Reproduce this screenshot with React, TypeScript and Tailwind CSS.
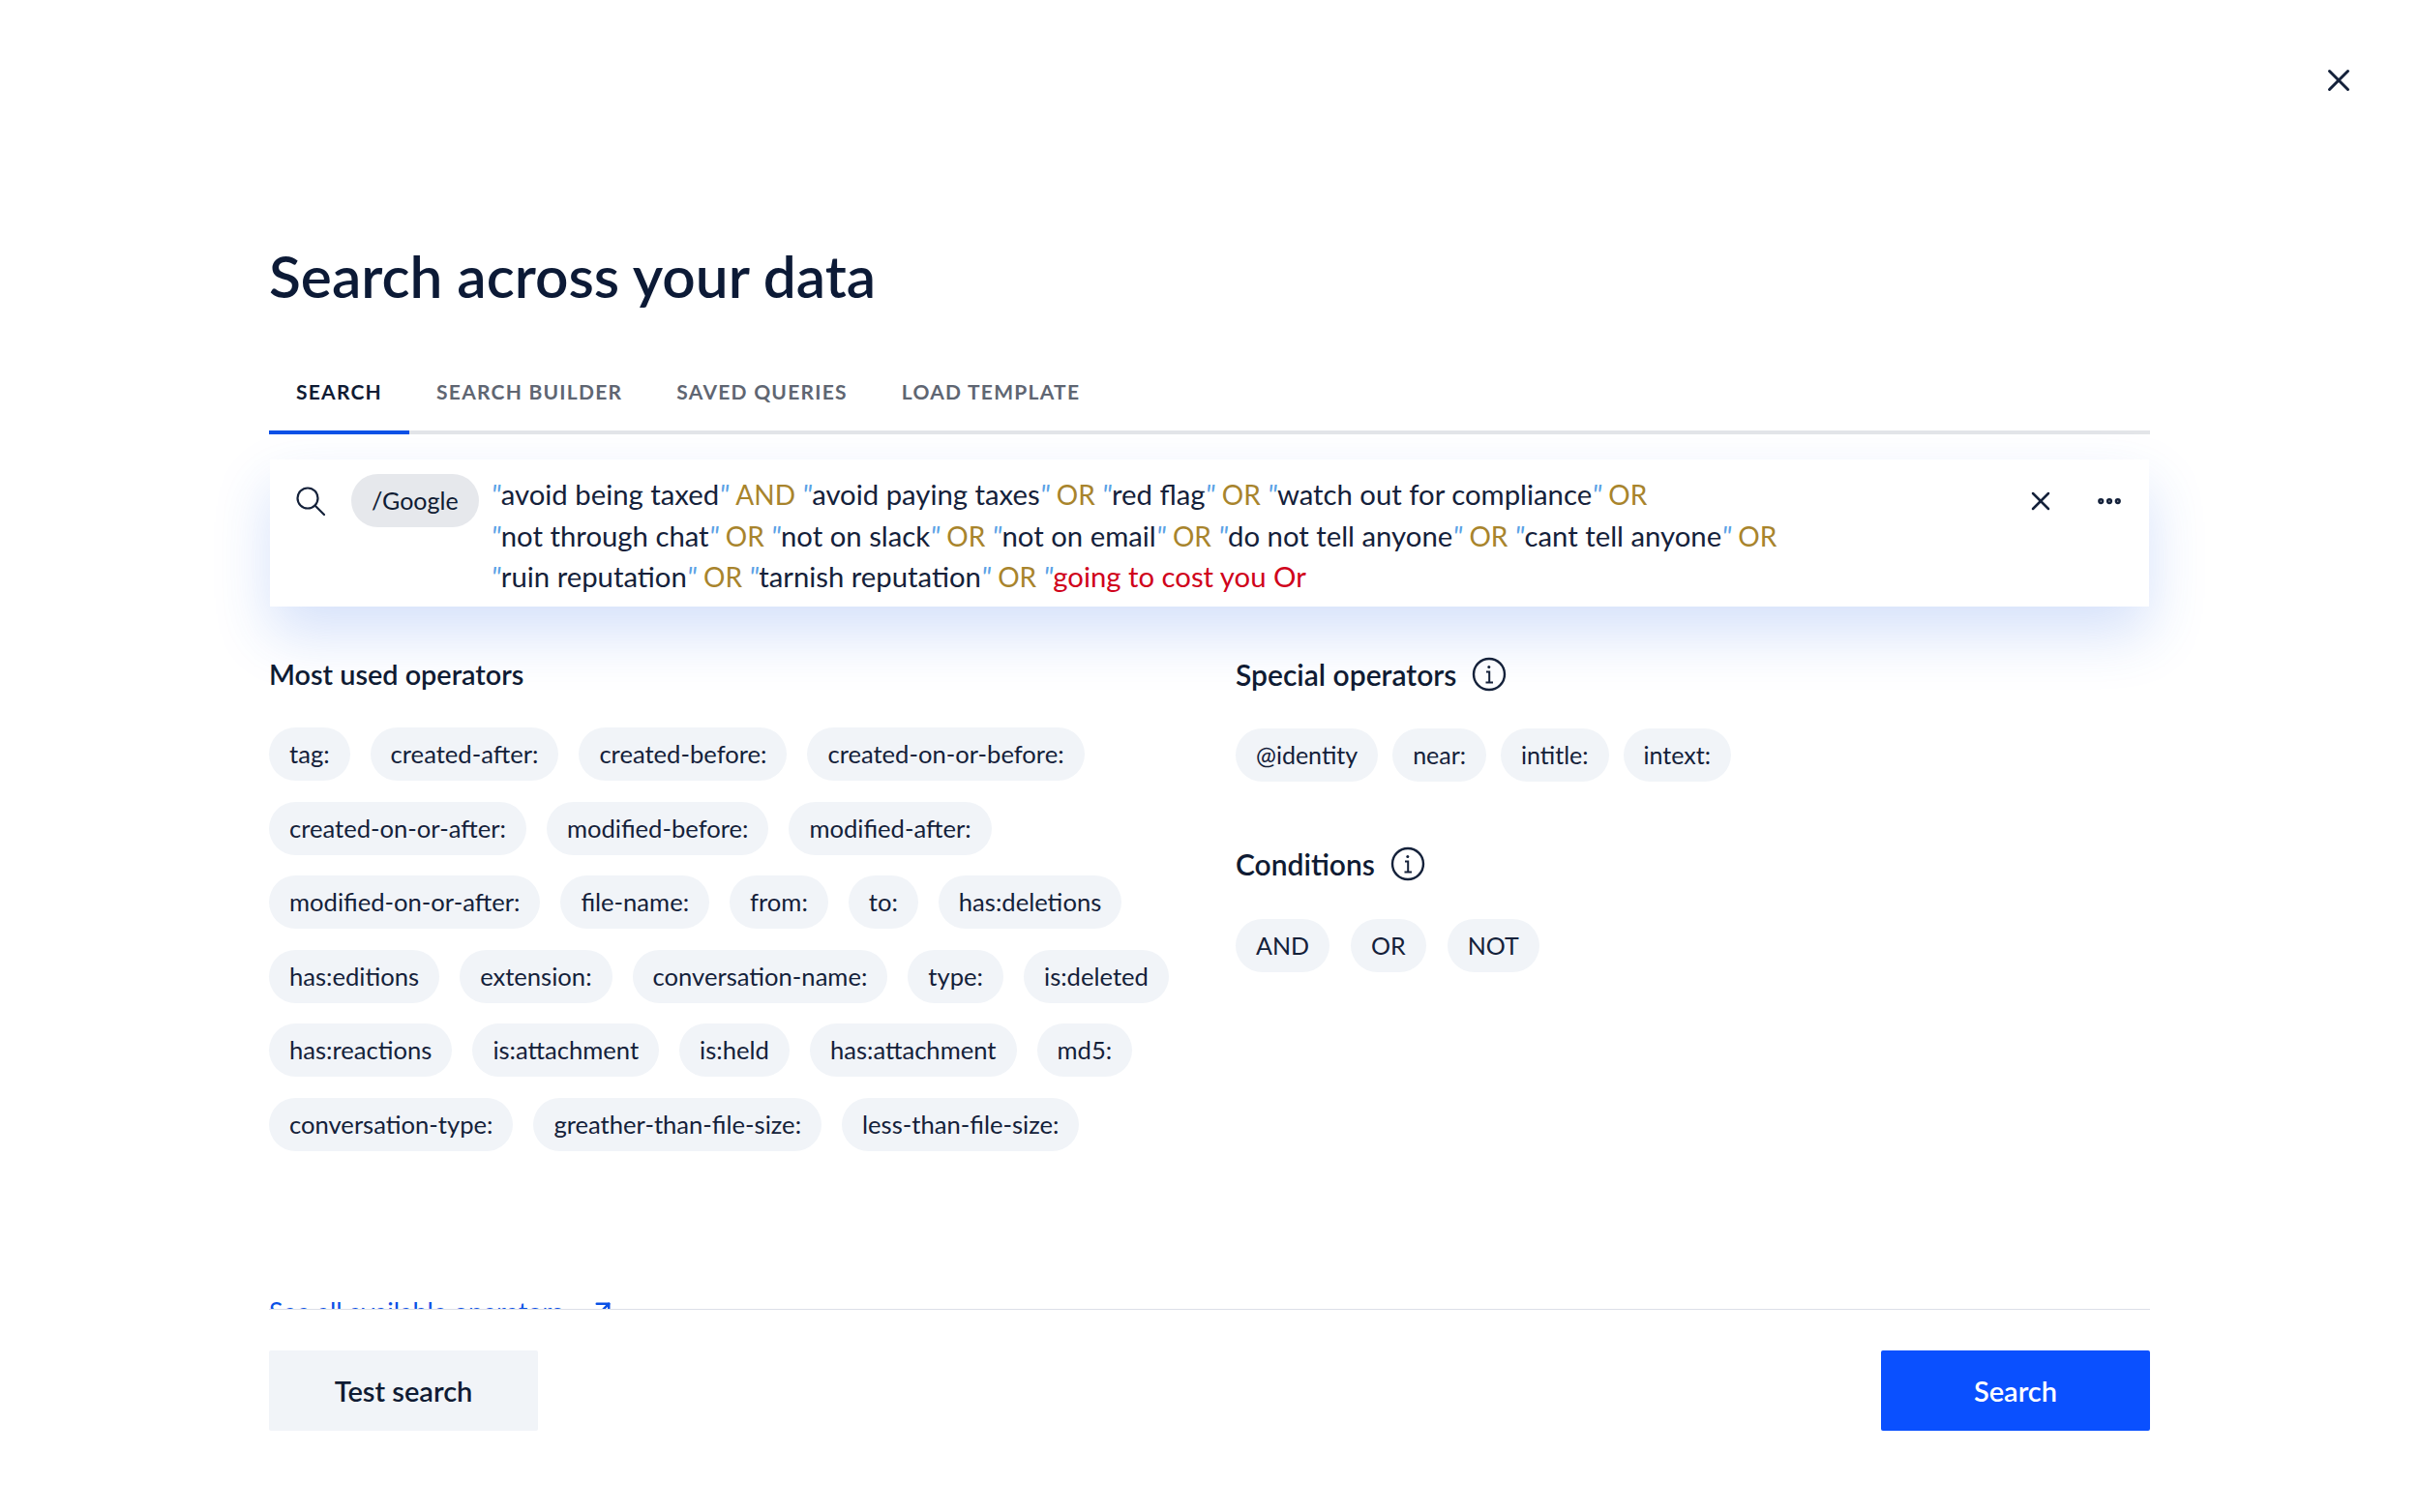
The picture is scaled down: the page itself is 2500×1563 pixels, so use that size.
import { X, Ellipsis, ArrowUpRight } from "lucide-react";

const mostUsed = [
  ["tag:", "created-after:", "created-before:", "created-on-or-before:"],
  ["created-on-or-after:", "modified-before:", "modified-after:"],
  ["modified-on-or-after:", "file-name:", "from:", "to:", "has:deletions"],
  ["has:editions", "extension:", "conversation-name:", "type:", "is:deleted"],
  ["has:reactions", "is:attachment", "is:held", "has:attachment", "md5:"],
  ["conversation-type:", "greather-than-file-size:", "less-than-file-size:"],
];

const tabs = ["SEARCH", "SEARCH BUILDER", "SAVED QUERIES", "LOAD TEMPLATE"];

function Pill({ label, wide }: { label: string; wide?: boolean }) {
  return (
    <span
      className={
        wide
          ? "flex h-[55px] items-center rounded-full bg-[#f1f4f8] px-[21px] text-[25.6px] whitespace-nowrap text-[#14213a]"
          : "flex h-[55px] items-center rounded-full bg-[#f1f4f8] px-[21px] text-[25px] whitespace-nowrap text-[#14213a]"
      }
    >
      {label}
    </span>
  );
}

function Term({ text }: { text: string }) {
  return (
    <>
      <span className="text-[#5aa2e6] italic">"</span>
      {text}
      <span className="text-[#5aa2e6] italic">"</span>
    </>
  );
}

function Op({ text = "OR" }: { text?: string }) {
  return <span className="mx-[7px] text-[28px] text-[#a8842c]">{text}</span>;
}

function InfoIcon() {
  return (
    <svg width="36" height="36" viewBox="0 0 36 36" fill="none" stroke="#14213a" strokeWidth="2.4">
      <circle cx="18" cy="18" r="16" />
      <path d="M15 15.5h3.2v11M14.5 26.5h7.5" strokeWidth="2" />
      <circle cx="17.8" cy="10.5" r="1.5" fill="#14213a" stroke="none" />
    </svg>
  );
}

function SearchIcon() {
  return (
    <svg className="mt-[13px] shrink-0" width="30" height="30" viewBox="0 0 30 30" fill="none" stroke="#14213a" strokeWidth="2.2" strokeLinecap="round">
      <circle cx="12" cy="12" r="10.5" />
      <path d="M19.5 19.5 29 29" />
    </svg>
  );
}

export default function App() {
  return (
    <div className="flex h-[1563px] flex-col bg-white font-['Lato',sans-serif] text-[#0f1b33]">
      {/* close */}
      <div className="flex justify-end pt-[64px] pr-[64px]">
        <X className="h-[38px] w-[38px] text-[#14213a]" strokeWidth={1.9} />
      </div>

      <div className="min-h-0 flex-1 overflow-hidden px-[278px]">
        <h1 className="mt-[143px] text-[60.4px] leading-[80px] font-semibold text-[#0c1a36]">Search across your data</h1>

        {/* tabs */}
        <div className="mt-[40px] flex h-[84px] border-b-4 border-[#e3e5e8]">
          {tabs.map((t, i) => (
            <div
              key={t}
              className={
                i === 0
                  ? "-mb-[4px] flex items-center border-b-4 border-[#0a50e6] px-[28px] text-[21px] font-bold tracking-[1.25px] text-[#0f1b33]"
                  : "flex items-center px-[28px] text-[21px] font-bold tracking-[1.25px] text-[#5f6672]"
              }
            >
              {t}
            </div>
          ))}
        </div>

        {/* search box */}
        <div className="mx-[1px] mt-[26px] flex h-[152px] bg-white pt-[15px] pr-[26px] pl-[27px] shadow-[0_28px_60px_rgba(45,105,230,0.2)]">
          <SearchIcon />
          <span className="ml-[27px] flex h-[55px] items-center rounded-full bg-[#e6e8ec] px-[21px] text-[25px]">/Google</span>
          <div className="ml-[13px] flex-1 text-[29.3px] leading-[41.5px] whitespace-nowrap text-[#14213a]">
            <div>
              <Term text="avoid being taxed" />
              <Op text="AND" />
              <Term text="avoid paying taxes" />
              <Op />
              <Term text="red flag" />
              <Op />
              <Term text="watch out for compliance" />
              <Op />
            </div>
            <div>
              <Term text="not through chat" />
              <Op />
              <Term text="not on slack" />
              <Op />
              <Term text="not on email" />
              <Op />
              <Term text="do not tell anyone" />
              <Op />
              <Term text="cant tell anyone" />
              <Op />
            </div>
            <div>
              <Term text="ruin reputation" />
              <Op />
              <Term text="tarnish reputation" />
              <Op />
              <span className="text-[#5aa2e6] italic">"</span>
              <span className="text-[#d0021b]">going to cost you Or</span>
            </div>
          </div>
          <div className="flex h-[55px] items-center gap-[40px]">
            <X className="h-[32px] w-[32px] text-[#14213a]" strokeWidth={1.9} />
            <Ellipsis className="h-[30px] w-[30px] text-[#14213a]" strokeWidth={3} />
          </div>
        </div>

        {/* operators */}
        <div className="mt-[50px] flex">
          <div className="w-[999px]">
            <h2 className="text-[28.8px] leading-[40px] font-semibold">Most used operators</h2>
            <div className="mt-[35px] flex flex-col gap-[21.5px]">
              {mostUsed.map((row) => (
                <div key={row[0]} className="flex gap-[21px]">
                  {row.map((p) => (
                    <Pill key={p} label={p} wide />
                  ))}
                </div>
              ))}
            </div>
            <a className="mt-[146px] flex items-start gap-[26px] text-[26.8px] leading-[40px] text-[#0a50e6]">
              See all available operators
              <ArrowUpRight className="mt-[3px] h-[30px] w-[30px]" strokeWidth={2} />
            </a>
          </div>
          <div className="flex-1">
            <div className="flex h-[40px] items-center gap-[16px]">
              <h2 className="text-[30px] font-semibold">Special operators</h2>
              <InfoIcon />
            </div>
            <div className="mt-[36px] flex gap-[15px]">
              {["@identity", "near:", "intitle:", "intext:"].map((p) => (
                <Pill key={p} label={p} />
              ))}
            </div>
            <div className="mt-[65px] flex h-[40px] items-center gap-[16px]">
              <h2 className="text-[30px] font-semibold">Conditions</h2>
              <InfoIcon />
            </div>
            <div className="mt-[37px] flex gap-[22px]">
              {["AND", "OR", "NOT"].map((p) => (
                <Pill key={p} label={p} />
              ))}
            </div>
          </div>
        </div>
      </div>

      {/* footer */}
      <div className="mx-[278px] flex h-[210px] shrink-0 items-start justify-between border-t border-[#dcdfe8] pt-[42px]">
        <button className="flex h-[83px] w-[278px] items-center justify-center rounded-[2px] bg-[#f1f4f8] text-[29px] font-semibold text-[#0f1b33]">
          Test search
        </button>
        <button className="flex h-[83px] w-[278px] items-center justify-center rounded-[2px] bg-[#0a50ff] text-[29px] font-semibold text-white">
          Search
        </button>
      </div>
    </div>
  );
}
